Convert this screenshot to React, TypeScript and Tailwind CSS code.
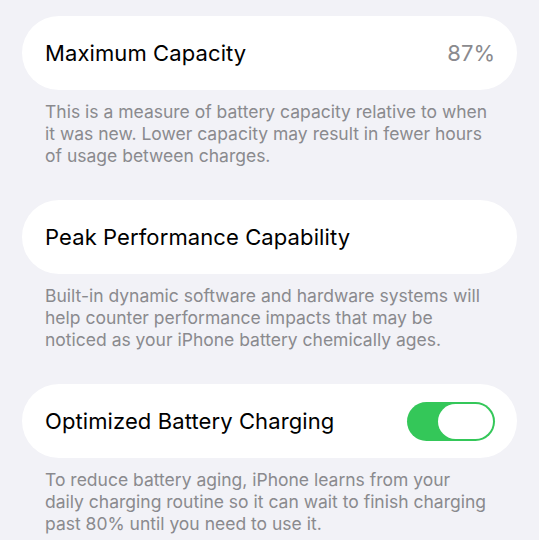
import React from 'react';

type Section = {
    title: string;
    value?: string;
    toggle?: boolean;
    note: string;
};

const sections: Section[] = [
    {
        title: 'Maximum Capacity',
        value: '87%',
        note: 'This is a measure of battery capacity relative to when it was new. Lower capacity may result in fewer hours of usage between charges.',
    },
    {
        title: 'Peak Performance Capability',
        note: 'Built-in dynamic software and hardware systems will help counter performance impacts that may be noticed as your iPhone battery chemically ages.',
    },
    {
        title: 'Optimized Battery Charging',
        toggle: true,
        note: 'To reduce battery aging, iPhone learns from your daily charging routine so it can wait to finish charging past 80% until you need to use it.',
    },
];

const Toggle = () => (
    <div className="w-[88px] h-[39px] rounded-full bg-[#34c759] p-[2px] flex justify-end">
        <div className="w-[55px] h-full rounded-full bg-white" />
    </div>
);

const App = () => {
    return (
        <div className="w-[539px] h-[540px] overflow-hidden bg-[#f2f2f7] px-[22px] pt-[16px] font-['Inter',sans-serif]">
            {sections.map((s) => (
                <div key={s.title} className="mb-[33px]">
                    <div className="h-[74px] rounded-full bg-white flex items-center justify-between pl-[23px] pr-[22px]">
                        <span className="text-[22px] text-black tracking-[0.1px]">{s.title}</span>
                        {s.value && <span className="text-[22px] text-[#8a8a8e]">{s.value}</span>}
                        {s.toggle && <Toggle />}
                    </div>
                    <p className="mt-[11px] px-[23px] text-[17.5px] leading-[22px] text-[#8a8a8e]">{s.note}</p>
                </div>
            ))}
        </div>
    );
};

export default App;
